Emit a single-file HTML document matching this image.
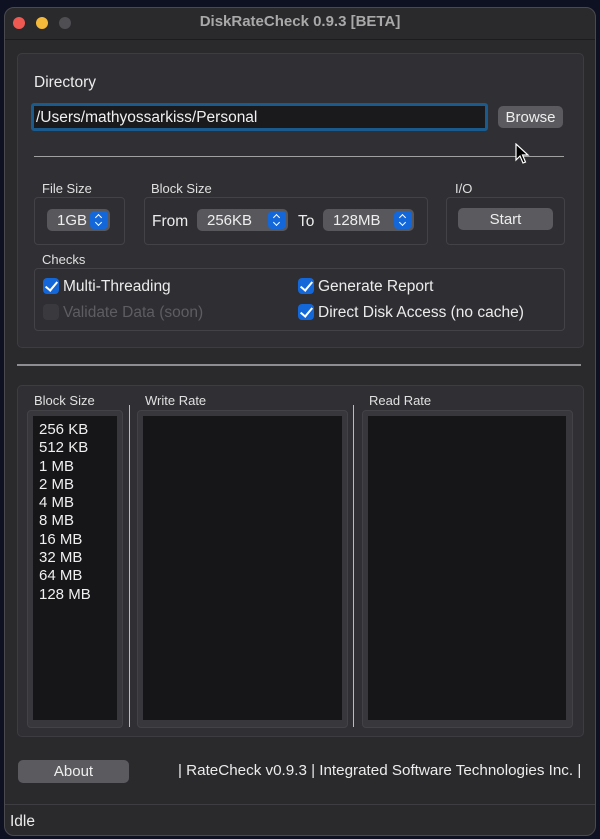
<!DOCTYPE html>
<html><head><meta charset="utf-8"><style>
*{margin:0;padding:0;box-sizing:border-box}
body{width:600px;height:839px;background:#0e1122;font-family:"Liberation Sans",sans-serif;color:#e6e6e6;position:relative;overflow:hidden}
.a{position:absolute}
.win{left:4px;top:7px;width:592px;height:829px;background:#2a292c;border-radius:10px;border:1px solid #4a494d}
.grp{background:#302f33;border:1px solid #3d3c40;border-radius:5px}
.lbl{font-size:13px;color:#e0e0e0}
.t14{font-size:15.5px;color:#ececec}
.pop{background:#58575b;border-radius:5px;font-size:15px;color:#eee;padding-left:10px;line-height:23px}
.arr{position:absolute;right:2px;top:2px;width:18px;height:18px;background:#1467d8;border-radius:4px}
.arr:before{content:"";position:absolute;left:6px;top:4px;width:4px;height:4px;border-left:1.5px solid #fff;border-top:1.5px solid #fff;transform:rotate(45deg)}
.arr:after{content:"";position:absolute;left:6px;top:9px;width:4px;height:4px;border-right:1.5px solid #fff;border-bottom:1.5px solid #fff;transform:rotate(45deg)}
.btn{background:#5b5a5e;border-radius:5px;font-size:15px;color:#eee;text-align:center;line-height:23px}
.cb{width:16px;height:16px;background:#1467d8;border-radius:4px}
.cb:after{content:"";position:absolute;left:5px;top:1px;width:5px;height:10px;border-right:2px solid #fff;border-bottom:2px solid #fff;transform:rotate(40deg)}
.list{background:#161518}
.box{background:#38373b;border:1px solid #434246;border-radius:4px}
</style></head><body>
<div class="a win"></div>
<div class="a" style="left:13px;top:17px;width:12px;height:12px;border-radius:50%;background:#ee5a52"></div>
<div class="a" style="left:36px;top:17px;width:12px;height:12px;border-radius:50%;background:#f4b83a"></div>
<div class="a" style="left:59px;top:17px;width:12px;height:12px;border-radius:50%;background:#4f4e52"></div>
<div class="a" style="left:0;width:600px;top:13px;text-align:center;font-size:15px;font-weight:bold;color:#a9a9a9">DiskRateCheck 0.9.3 [BETA]</div>
<div class="a" style="left:5px;top:39px;width:590px;height:1px;background:#1c1b1e"></div>

<div class="a grp" style="left:17px;top:53px;width:567px;height:295px"></div>
<div class="a t14" style="left:34px;top:74px">Directory</div>
<div class="a" style="left:31px;top:103px;width:457px;height:28px;border:3px solid #1a5a8c;border-radius:3px;background:#1a191c"></div>
<div class="a t14" style="left:36px;top:109px;color:#f0f0f0">/Users/mathyossarkiss/Personal</div>
<div class="a btn" style="left:498px;top:106px;width:65px;height:22px">Browse</div>
<div class="a" style="left:34px;top:156px;width:530px;height:1px;background:#a0a0a0"></div>
<svg class="a" style="left:514px;top:143px" width="16" height="22"><path d="M2 1 L2 17 L6 13 L9 20 L11.5 19 L8.5 12 L14 12 Z" fill="#000" stroke="#fff" stroke-width="1.2"/></svg>

<div class="a lbl" style="left:42px;top:181px">File Size</div>
<div class="a box" style="left:34px;top:197px;width:91px;height:48px;background:#2f2e32"></div>
<div class="a pop" style="left:47px;top:209px;width:63px;height:22px">1GB<div class="arr"></div></div>
<div class="a lbl" style="left:151px;top:181px">Block Size</div>
<div class="a box" style="left:144px;top:197px;width:284px;height:48px;background:#2f2e32"></div>
<div class="a t14" style="left:152px;top:213px">From</div>
<div class="a pop" style="left:197px;top:209px;width:91px;height:22px">256KB<div class="arr"></div></div>
<div class="a t14" style="left:298px;top:213px">To</div>
<div class="a pop" style="left:323px;top:209px;width:91px;height:22px">128MB<div class="arr"></div></div>
<div class="a lbl" style="left:455px;top:181px">I/O</div>
<div class="a box" style="left:446px;top:197px;width:119px;height:48px;background:#2f2e32"></div>
<div class="a btn" style="left:458px;top:208px;width:95px;height:22px">Start</div>

<div class="a lbl" style="left:42px;top:252px">Checks</div>
<div class="a box" style="left:34px;top:268px;width:531px;height:63px;background:#2f2e32"></div>
<div class="a cb" style="left:43px;top:278px"></div>
<div class="a t14" style="left:63px;top:278px">Multi-Threading</div>
<div class="a" style="left:43px;top:304px;width:16px;height:16px;border-radius:4px;background:#3a393d"></div>
<div class="a t14" style="left:63px;top:304px;color:#5e5d61">Validate Data (soon)</div>
<div class="a cb" style="left:298px;top:278px"></div>
<div class="a t14" style="left:318px;top:278px">Generate Report</div>
<div class="a cb" style="left:298px;top:304px"></div>
<div class="a t14" style="left:318px;top:304px">Direct Disk Access (no cache)</div>

<div class="a" style="left:17px;top:364px;width:564px;height:2px;background:#8e8d91"></div>

<div class="a grp" style="left:17px;top:385px;width:567px;height:352px"></div>
<div class="a lbl" style="left:34px;top:393px">Block Size</div>
<div class="a box" style="left:27px;top:410px;width:96px;height:318px"></div>
<div class="a list" style="left:33px;top:416px;width:84px;height:304px"></div>
<div class="a" style="left:39px;top:421px;font-size:15px;line-height:18.3px;color:#f0f0f0">256 KB<br>512 KB<br>1 MB<br>2 MB<br>4 MB<br>8 MB<br>16 MB<br>32 MB<br>64 MB<br>128 MB</div>
<div class="a" style="left:129px;top:405px;width:1px;height:322px;background:#bbb"></div>
<div class="a lbl" style="left:145px;top:393px">Write Rate</div>
<div class="a box" style="left:137px;top:410px;width:211px;height:318px"></div>
<div class="a list" style="left:143px;top:416px;width:199px;height:304px"></div>
<div class="a" style="left:353px;top:405px;width:1px;height:322px;background:#bbb"></div>
<div class="a lbl" style="left:369px;top:393px">Read Rate</div>
<div class="a box" style="left:362px;top:410px;width:211px;height:318px"></div>
<div class="a list" style="left:368px;top:416px;width:198px;height:304px"></div>

<div class="a btn" style="left:18px;top:760px;width:111px;height:23px">About</div>
<div class="a t14" style="left:178px;top:762px;font-size:15.2px">| RateCheck v0.9.3 | Integrated Software Technologies Inc. |</div>
<div class="a" style="left:5px;top:804px;width:590px;height:1px;background:#3e3d41"></div>
<div class="a t14" style="left:10px;top:813px">Idle</div>
</body></html>
